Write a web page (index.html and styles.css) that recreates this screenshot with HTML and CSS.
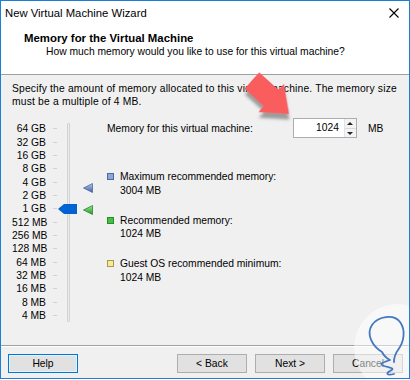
FILE: index.html
```html
<!DOCTYPE html>
<html lang="en">
<head>
    <meta charset="UTF-8">
    <title>New Virtual Machine Wizard</title>
    <link rel="stylesheet" href="styles.css">
</head>
<body>
<div class="window">
    <div class="titlebar">
        <span class="title">New Virtual Machine Wizard</span>
        <svg class="close" width="10" height="10" viewBox="0 0 10 10">
            <path d="M0.5 0.5 L9.5 9.5 M9.5 0.5 L0.5 9.5" stroke="#000" stroke-width="1.1" fill="none"/>
        </svg>
    </div>
    <div class="header">
        <div class="heading">Memory for the Virtual Machine</div>
        <div class="subheading">How much memory would you like to use for this virtual machine?</div>
    </div>
    <div class="content">
        <p class="intro">Specify the amount of memory allocated to this virtual machine. The memory size<br>must be a multiple of 4 MB.</p>
        <div class="main">
            <div class="scale">
                <div class="labels">
                    <span>64 GB</span><span>32 GB</span><span>16 GB</span><span>8 GB</span><span>4 GB</span>
                    <span>2 GB</span><span>1 GB</span><span>512 MB</span><span>256 MB</span><span>128 MB</span>
                    <span>64 MB</span><span>32 MB</span><span>16 MB</span><span>8 MB</span><span>4 MB</span>
                </div>
                <div class="ticks">
                    <i></i><i></i><i></i><i></i><i></i><i></i><i></i><i></i><i></i><i></i><i></i><i></i><i></i><i></i><i></i>
                </div>
                <div class="track"></div>
                <!-- markers sit on the scale at their memory values -->
                <svg class="marker marker-max" width="10" height="10" viewBox="0 0 10 10">
                    <defs>
                        <linearGradient id="gBlue" x1="0" y1="0" x2="0" y2="1">
                            <stop offset="0" stop-color="#b9c9ea"/>
                            <stop offset="1" stop-color="#3d5f9f"/>
                        </linearGradient>
                    </defs>
                    <path d="M0.5 5 L9.5 0.5 L9.5 9.5 Z" fill="url(#gBlue)" stroke="#4a6aa8" stroke-width="0.8"/>
                </svg>
                <svg class="marker marker-rec" width="10" height="10" viewBox="0 0 10 10">
                    <defs>
                        <linearGradient id="gGreen" x1="0" y1="0" x2="0" y2="1">
                            <stop offset="0" stop-color="#9be39b"/>
                            <stop offset="1" stop-color="#1f9a1f"/>
                        </linearGradient>
                    </defs>
                    <path d="M0.5 5 L9.5 0.5 L9.5 9.5 Z" fill="url(#gGreen)" stroke="#2a8a2a" stroke-width="0.8"/>
                </svg>
                <svg class="thumb" width="19" height="10" viewBox="0 0 19 10">
                    <path d="M0 5 L6 0 L19 0 L19 10 L6 10 Z" fill="#0063d1"/>
                </svg>
            </div>
            <div class="panel">
                <div class="memrow">
                    <span class="memlabel">Memory for this virtual machine:</span>
                    <div class="spin">
                        <div class="spin-value">1024</div>
                        <div class="spin-btns">
                            <span class="up"></span>
                            <span class="down"></span>
                        </div>
                    </div>
                    <span class="unit">MB</span>
                </div>
                <div class="legend">
                    <div class="item">
                        <div class="item-title"><i class="swatch swatch-max"></i>Maximum recommended memory:</div>
                        <div class="item-value">3004 MB</div>
                    </div>
                    <div class="item">
                        <div class="item-title"><i class="swatch swatch-rec"></i>Recommended memory:</div>
                        <div class="item-value">1024 MB</div>
                    </div>
                    <div class="item">
                        <div class="item-title"><i class="swatch swatch-min"></i>Guest OS recommended minimum:</div>
                        <div class="item-value">1024 MB</div>
                    </div>
                </div>
            </div>
        </div>
    </div>
    <div class="footer">
        <button class="btn btn-default">Help</button>
        <div class="nav">
            <button class="btn">&lt; Back</button>
            <button class="btn">Next &gt;</button>
            <button class="btn">Cancel</button>
        </div>
    </div>
    <svg class="annotation" width="410" height="380" viewBox="0 0 410 380">
        <defs>
            <filter id="shadow" x="-30%" y="-30%" width="160%" height="160%">
                <feDropShadow dx="4" dy="4" stdDeviation="1.6" flood-color="#555" flood-opacity="0.55"/>
            </filter>
        </defs>
        <g transform="translate(289 114) rotate(42)" filter="url(#shadow)">
            <polygon points="0,0 -24,-19 -24,-11 -50,-11 -50,11 -24,11 -24,19" fill="#f95d5d"/>
        </g>
        <circle cx="398" cy="348" r="44" fill="#ffffff" fill-opacity="0.5"/>
        <path d="M382 352 C372 346 366 334 372 325 C378 316 394 314 400 322 C406 330 404 342 398 350 C395 354 394 358 394 362 M382 352 C384 356 386 358 390 360 C384 362 378 364 384 366 C390 368 396 368 390 371 C386 373 386 376 394 374"
              fill="none" stroke="#4479c1" stroke-width="1.8" stroke-linecap="round" stroke-linejoin="round"/>
    </svg>
</div>
</body>
</html>
```

FILE: styles.css
```css
body {
    margin: 0;
    padding: 0;
    font-family: "Liberation Sans", Arial, sans-serif;
    font-size: 10.3px;
    color: #000;
    background: #fff;
}
.window {
    position: relative;
    width: 410px;
    height: 379px;
    box-sizing: border-box;
    border: 1px solid #1a7fd6;
    background: #f0f0f0;
    display: flex;
    flex-direction: column;
    overflow: hidden;
}
.titlebar {
    height: 23px;
    background: #fff;
    display: flex;
    align-items: center;
    justify-content: space-between;
    padding: 0 10px 0 4px;
}
.title {
    font-size: 11.3px;
}
.close {
    display: block;
}
.header {
    background: #fff;
    padding: 7px 0 15px 23px;
    border-bottom: 1px solid #a0a0a0;
}
.heading {
    font-weight: bold;
    font-size: 11.4px;
    line-height: 14px;
}
.subheading {
    line-height: 14px;
    padding-left: 22px;
}
.content {
    flex: 1;
    padding: 7px 0 0 11px;
}
.intro {
    margin: 0;
    line-height: 13px;
    letter-spacing: 0.18px;
}
.main {
    display: flex;
    margin-top: 10px;
}
.scale {
    position: relative;
    display: flex;
    width: 95px;
    height: 200px;
    margin-top: 4.3px;
}
.labels {
    width: 34px;
    display: flex;
    flex-direction: column;
    text-align: right;
    white-space: nowrap;
}
.labels span {
    height: 13.333px;
    line-height: 13.333px;
}
.ticks {
    width: 4px;
    margin-left: 7px;
    display: flex;
    flex-direction: column;
}
.ticks i {
    height: 13.333px;
    position: relative;
}
.ticks i::after {
    content: "";
    position: absolute;
    left: 0;
    right: 0;
    top: 6px;
    height: 1px;
    background: #d2d2d2;
}
.track {
    width: 3px;
    height: 199px;
    margin: 1px 0 0 10px;
    box-sizing: border-box;
    border: 1px solid #d3d3d3;
    background: #ececec;
    border-radius: 1px;
}
.marker {
    position: absolute;
    left: 71px;
    display: block;
}
.marker-max {
    top: 60.7px;
}
.marker-rec {
    top: 82.3px;
}
.thumb {
    position: absolute;
    left: 46px;
    top: 81.7px;
    display: block;
}
.panel {
    flex: 1;
}
.memrow {
    display: flex;
    align-items: center;
    height: 20px;
}
.memlabel {
    width: 186px;
}
.spin {
    display: flex;
    width: 64px;
    height: 20px;
    box-sizing: border-box;
    border: 1px solid #abadb3;
    background: #fff;
}
.spin-value {
    flex: 1;
    text-align: right;
    padding-right: 5px;
    line-height: 18px;
}
.spin-btns {
    width: 11px;
    display: flex;
    flex-direction: column;
    border-left: 1px solid #e3e3e3;
    background: #f3f3f3;
}
.spin-btns span {
    flex: 1;
    position: relative;
}
.spin-btns .up {
    border-bottom: 1px solid #d9d9d9;
}
.spin-btns span::after {
    content: "";
    position: absolute;
    left: 2px;
    border-left: 3px solid transparent;
    border-right: 3px solid transparent;
}
.spin-btns .up::after {
    top: 3px;
    border-bottom: 3px solid #222;
}
.spin-btns .down::after {
    top: 3px;
    border-top: 3px solid #222;
}
.unit {
    margin-left: 11px;
}
.legend {
    margin-top: 32px;
    display: flex;
    flex-direction: column;
    gap: 16.5px;
}
.item {
    line-height: 13.5px;
}
.item-title {
    display: flex;
    align-items: center;
}
.item-value {
    padding-left: 13px;
}
.swatch {
    width: 7px;
    height: 7px;
    margin-right: 6px;
    border: 1px solid;
    box-sizing: border-box;
}
.swatch-max {
    background: #8ea7d6;
    border-color: #4b69a3;
}
.swatch-rec {
    background: #45bf45;
    border-color: #2b8a2b;
}
.swatch-min {
    background: #f4ec8f;
    border-color: #a8975a;
}
.footer {
    display: flex;
    justify-content: space-between;
    padding: 8px 6px 5px 7px;
    border-top: 1px solid #a0a0a0;
    box-shadow: inset 0 1px 0 #fff;
}
.nav {
    display: flex;
    gap: 8px;
}
.btn {
    width: 70px;
    height: 19px;
    padding: 0;
    font-family: inherit;
    font-size: 10.3px;
    color: #000;
    background: #e1e1e1;
    border: 1px solid #adadad;
}
.btn-default {
    border-color: #0078d7;
    box-shadow: inset 0 0 0 1px #e5f1fb;
}
.annotation {
    position: absolute;
    left: -1px;
    top: -1px;
    pointer-events: none;
}
```
